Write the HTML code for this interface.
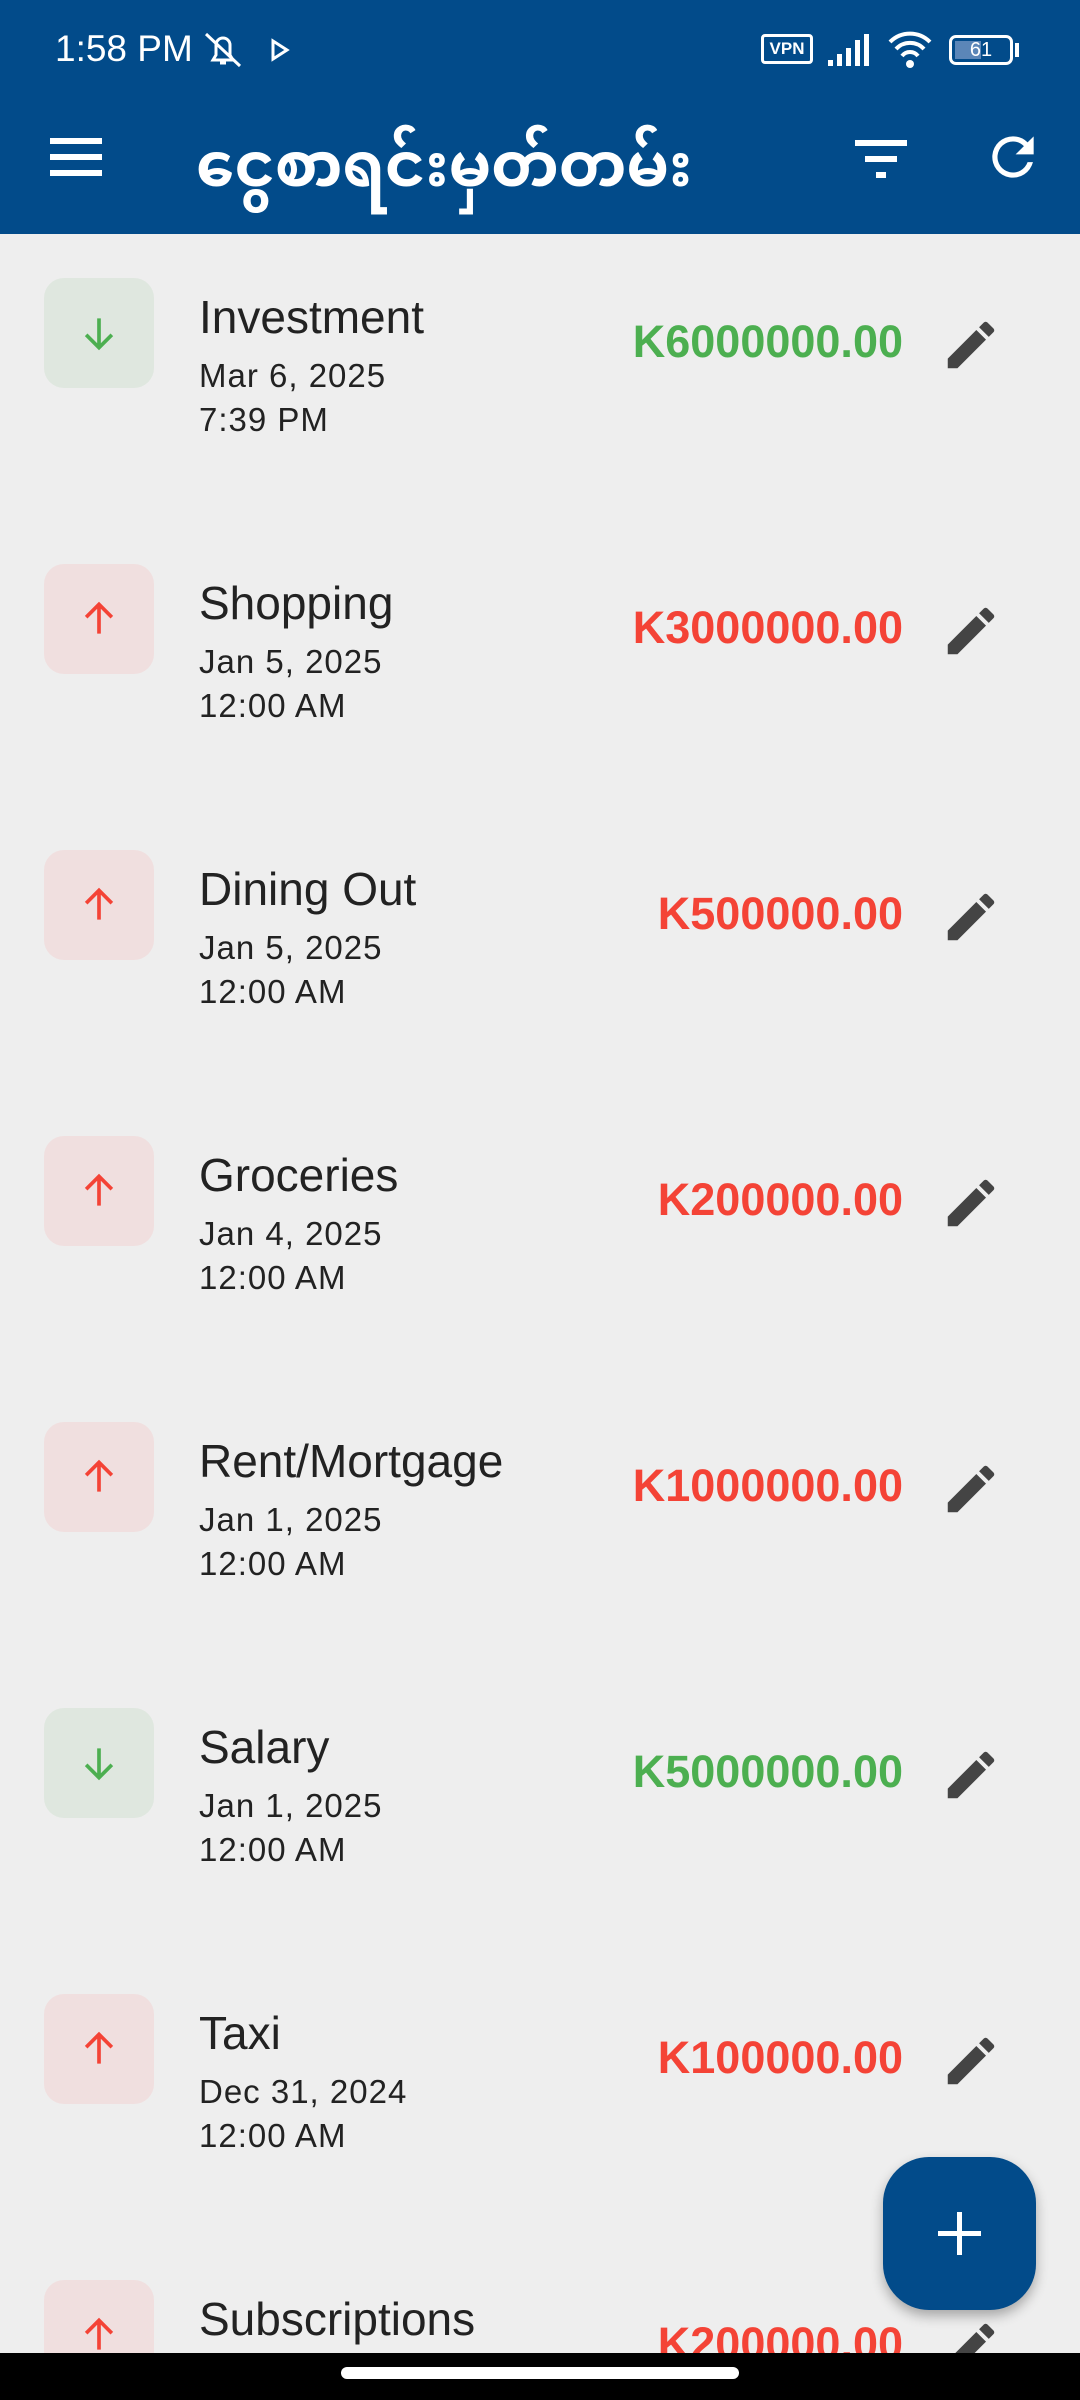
<!DOCTYPE html>
<html><head><meta charset="utf-8"><style>
*{margin:0;padding:0;box-sizing:border-box}
html,body{width:1080px;height:2400px;overflow:hidden}
body{background:#eeeeee;font-family:"Liberation Sans",sans-serif}
#wrap{position:relative;width:1080px;height:2400px;overflow:hidden;background:#eeeeee}
.hdr{position:absolute;left:0;top:0;width:1080px;height:234px;background:#024b8a;color:#fff}
.abs{position:absolute}
.row{position:absolute;left:0;width:1080px;height:200px}
.ib{position:absolute;left:44px;top:0;width:110px;height:110px;border-radius:20px}
.ib.g{background:#dfe7df}.ib.r{background:#f0dfdf}
.t{position:absolute;left:199px;top:12px;font-size:46px;color:#222;white-space:nowrap}
.d{position:absolute;left:199px;top:76px;font-size:33px;color:#222;line-height:44px;letter-spacing:1px}
.a{position:absolute;right:177px;top:38px;font-size:45px;font-weight:bold;white-space:nowrap}
.a.g{color:#4caf50}.a.r{color:#f44336}
.pen{position:absolute;left:940px;top:36px}
</style></head><body><div id="wrap">
<div class="hdr">
 <div class="abs" style="left:55px;top:28px;font-size:37px">1:58 PM</div>
 <svg class="abs" style="left:198px;top:30px" width="50" height="40" viewBox="0 0 50 40"><path d="M15 30h20l-3-5V15a7 7 0 0 0-14 0v10z M22 33h6" fill="none" stroke="#fff" stroke-width="3"/><path d="M8 4L42 36" stroke="#fff" stroke-width="3"/></svg>
 <svg class="abs" style="left:270px;top:38px" width="20" height="24"><path d="M3 3l14 9-14 9z" fill="none" stroke="#fff" stroke-width="3"/></svg>
 <div class="abs" style="left:761px;top:34px;width:52px;height:30px;border:3px solid #fff;border-radius:4px;font-size:17px;font-weight:bold;text-align:center;line-height:24px">VPN</div>
 <svg class="abs" style="left:826px;top:32px" width="50" height="36"><rect x="2" y="28" width="5" height="6" fill="#fff"/><rect x="11" y="22" width="5" height="12" fill="#fff"/><rect x="20" y="16" width="5" height="18" fill="#fff"/><rect x="29" y="8" width="5" height="26" fill="#fff"/><rect x="38" y="2" width="5" height="32" fill="#fff"/></svg>
 <svg class="abs" style="left:886px;top:28px" width="48" height="42" viewBox="0 0 48 42"><path d="M4 14a28 28 0 0 1 40 0M10 21a19 19 0 0 1 28 0M16 28a10 10 0 0 1 16 0" fill="none" stroke="#fff" stroke-width="4"/><circle cx="24" cy="36" r="4" fill="#fff"/></svg>
 <div class="abs" style="left:949px;top:35px;width:64px;height:30px;border:3px solid #fff;border-radius:7px;font-size:20px;text-align:center;line-height:24px"><div class="abs" style="left:3px;top:3px;width:26px;height:18px;background:#5b86b8"></div><span style="position:relative">61</span></div>
 <div class="abs" style="left:1015px;top:43px;width:4px;height:14px;background:#fff"></div>
 <svg class="abs" style="left:50px;top:138px" width="52" height="40"><rect y="0" width="52" height="6" fill="#fff"/><rect y="16" width="52" height="6" fill="#fff"/><rect y="32" width="52" height="6" fill="#fff"/></svg>
 <div class="abs" style="left:196px;top:106px;font-size:61px;font-weight:bold;font-family:'Noto Sans Myanmar','Padauk','Myanmar Text',sans-serif;white-space:nowrap">ငွေစာရင်းမှတ်တမ်း</div>
 <svg class="abs" style="left:855px;top:140px" width="52" height="40"><rect x="0" y="0" width="52" height="6" fill="#fff"/><rect x="10" y="16" width="32" height="6" fill="#fff"/><rect x="21" y="32" width="10" height="6" fill="#fff"/></svg>
 <svg class="abs" style="left:982px;top:126px" width="62" height="62" viewBox="0 0 24 24"><path d="M17.65 6.35A7.96 7.96 0 0 0 12 4a8 8 0 1 0 7.73 10h-2.08A6 6 0 1 1 12 6c1.66 0 3.14.69 4.22 1.78L13 11h7V4z" fill="#fff"/></svg>
</div>

<div id="list"></div>
<script>
var items=[["Investment","Mar 6, 2025","7:39 PM","K6000000.00","g"],["Shopping","Jan 5, 2025","12:00 AM","K3000000.00","r"],["Dining Out","Jan 5, 2025","12:00 AM","K500000.00","r"],["Groceries","Jan 4, 2025","12:00 AM","K200000.00","r"],["Rent/Mortgage","Jan 1, 2025","12:00 AM","K1000000.00","r"],["Salary","Jan 1, 2025","12:00 AM","K5000000.00","g"],["Taxi","Dec 31, 2024","12:00 AM","K100000.00","r"],["Subscriptions","","","K200000.00","r"]];
var h="";
items.forEach(function(it,i){
 var c=it[4]=="g"?"#4caf50":"#f44336";
 var arrow=it[4]=="g"?"M12 4v16M5 13l7 7 7-7":"M12 20V4M5 11l7-7 7 7";
 var last=i==items.length-1;
 h+='<div class="row" style="top:'+(278+286*i)+'px;'+(last?'height:120px;overflow:hidden':'')+'"><div class="ib '+it[4]+'"><svg style="position:absolute;left:33px;top:33px" width="44" height="44" viewBox="0 0 24 24"><path d="'+arrow+'" fill="none" stroke="'+c+'" stroke-width="2"/></svg></div><div class="t">'+it[0]+'</div>'+(last?'':'<div class="d">'+it[1]+'<br>'+it[2]+'</div>')+'<div class="a '+it[4]+'">'+it[3]+'</div><svg class="pen" width="62" height="62" viewBox="0 0 24 24"><path d="M3 17.25V21h3.75L17.81 9.94l-3.75-3.75zM20.71 7.04a1 1 0 0 0 0-1.41l-2.34-2.34a1 1 0 0 0-1.41 0l-1.83 1.83 3.75 3.75z" fill="#444"/></svg></div>';
});
document.getElementById("list").innerHTML=h;
</script>
<div class="abs" style="left:883px;top:2157px;width:153px;height:153px;border-radius:46px;background:#024b8a;box-shadow:0 6px 12px rgba(0,0,0,0.3)"><svg style="position:absolute;left:53px;top:53px" width="47" height="47"><rect x="21" y="2" width="5" height="43" fill="#fff"/><rect x="2" y="21" width="43" height="5" fill="#fff"/></svg></div>
<div class="abs" style="left:0;top:2353px;width:1080px;height:47px;background:#000"><div class="abs" style="left:341px;top:14px;width:398px;height:12px;border-radius:6px;background:#fff"></div></div>
</div></body></html>
